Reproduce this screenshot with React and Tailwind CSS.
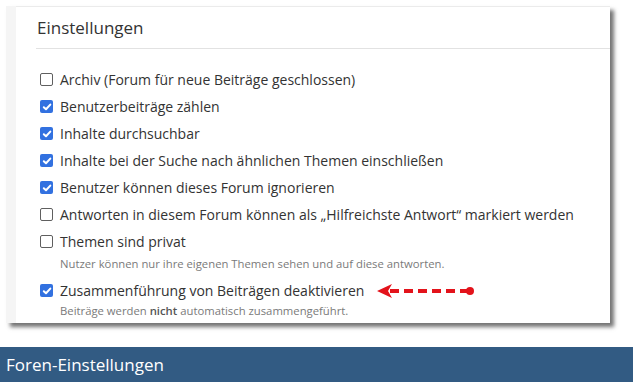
const font = { fontFamily: '"Open Sans", "Noto Sans", sans-serif' };

function Box({ checked }) {
  if (checked) {
    return (
      <span className="w-[13px] h-[13px] rounded-[2px] bg-[#3271e0] flex items-center justify-center shrink-0">
        <svg width="10" height="10" viewBox="0 0 10 10">
          <path d="M1.8 5.2 L4 7.3 L8.3 2.6" fill="none" stroke="white" strokeWidth="2" strokeLinecap="round" strokeLinejoin="round" />
        </svg>
      </span>
    );
  }
  return <span className="w-[13px] h-[13px] rounded-[2px] border border-[#5f5f5f] bg-white shrink-0" />;
}

function Row({ checked, children, extra }) {
  return (
    <div className="h-[27px] flex items-center">
      <Box checked={checked} />
      <span className="ml-[7px] text-[14px] text-[#333] whitespace-nowrap">{children}</span>
      {extra}
    </div>
  );
}

function Arrow() {
  return (
    <svg width="100" height="16" viewBox="0 0 100 16" className="ml-[13px] shrink-0">
      <path d="M0 8 L15 1 L11 8 L15 15 Z" fill="#e3131b" />
      <line x1="13" y1="8" x2="92" y2="8" stroke="#e3131b" strokeWidth="4" strokeDasharray="9 5" />
      <circle cx="93" cy="8" r="4" fill="#e3131b" />
    </svg>
  );
}

export default function App() {
  return (
    <div className="w-[633px] h-[382px] bg-white flex flex-col overflow-hidden" style={font}>
      <div className="pt-[6px] pl-[6px]">
        <div className="w-[604px] h-[317px] flex bg-white shadow-[4px_4px_4px_rgba(0,0,0,0.55)]">
          <div className="w-[10px] bg-[#f5f5f5]" />
          <div className="flex-1 border-t border-[#ebebeb]">
            <div className="pl-[21px] h-[41px] flex items-center text-[17px] text-[#333]">Einstellungen</div>
            <div className="ml-[20px] border-t border-[#e2e2e2]" />
            <div className="pl-[24px] pt-[17px]">
              <Row>Archiv (Forum für neue Beiträge geschlossen)</Row>
              <Row checked>Benutzerbeiträge zählen</Row>
              <Row checked>Inhalte durchsuchbar</Row>
              <Row checked>Inhalte bei der Suche nach ähnlichen Themen einschließen</Row>
              <Row checked>Benutzer können dieses Forum ignorieren</Row>
              <Row>Antworten in diesem Forum können als „Hilfreichste Antwort“ markiert werden</Row>
              <Row>Themen sind privat</Row>
              <div className="pl-[20px] mt-[2px] mb-[6px] text-[11.3px] leading-[14px] text-[#7a7a7a]">
                Nutzer können nur ihre eigenen Themen sehen und auf diese antworten.
              </div>
              <Row checked extra={<Arrow />}>Zusammenführung von Beiträgen deaktivieren</Row>
              <div className="pl-[20px] text-[11.3px] leading-[14px] text-[#7a7a7a]">
                Beiträge werden <span className="font-semibold text-[#555]">nicht</span> automatisch zusammengeführt.
              </div>
            </div>
          </div>
        </div>
      </div>
      <div className="mt-auto h-[35px] bg-[#325b83] flex items-center pl-[6px] text-[17px] text-white">
        Foren-Einstellungen
      </div>
    </div>
  );
}
